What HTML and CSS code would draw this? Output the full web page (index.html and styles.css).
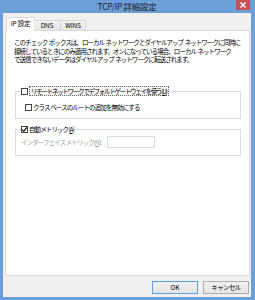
FILE: index.html
```html
<!DOCTYPE html>
<html lang="ja">
<head>
  <meta charset="UTF-8">
  <title>TCP/IP 詳細設定</title>
  <link rel="stylesheet" href="styles.css">
</head>
<body>
  <div class="window">
    <div class="titlebar">
      <span class="title">TCP/IP 詳細設定</span>
      <span class="close">
        <svg width="6" height="6" viewBox="0 0 6 6"><path d="M0.5 0.5 L5.5 5.5 M5.5 0.5 L0.5 5.5" stroke="#fff" stroke-width="1.4"/></svg>
      </span>
    </div>
    <div class="client">
      <div class="tabs">
        <div class="tab active">IP 設定</div>
        <div class="tab dns">DNS</div>
        <div class="tab wins">WINS</div>
      </div>
      <div class="panel">
        <p class="desc">このチェック ボックスは、ローカル ネットワークとダイヤルアップ ネットワークに同時に<br>接続しているときにのみ適用されます。オンになっている場合、ローカル ネットワーク<br>で送信できないデータはダイヤルアップ ネットワークに転送されます。</p>

        <fieldset class="group group-gw">
          <legend class="check">
            <span class="box"></span>
            <span class="focus">リモート ネットワークでデフォルト ゲートウェイを使う(<u>U</u>)</span>
          </legend>
          <div class="check sub">
            <span class="box"></span>
            <span>クラス ベースのルートの追加を無効にする</span>
          </div>
        </fieldset>

        <fieldset class="group group-metric">
          <legend class="check">
            <span class="box checked">
              <svg width="7" height="7" viewBox="0 0 7 7"><path d="M1.2 3.6 L2.8 5.2 L5.8 1.4" fill="none" stroke="#222" stroke-width="1.3"/></svg>
            </span>
            <span>自動メトリック(<u>A</u>)</span>
          </legend>
          <div class="metric-row">
            <span class="disabled">インターフェイス メトリック(<u>N</u>):</span>
            <span class="input"></span>
          </div>
        </fieldset>
      </div>
      <div class="buttons">
        <button class="btn default">OK</button>
        <button class="btn">キャンセル</button>
      </div>
    </div>
  </div>
</body>
</html>
```

FILE: styles.css
```css
body {
  margin: 0;
  font-family: "Noto Sans CJK JP", "Noto Sans", sans-serif;
  color: #000;
}
.window {
  width: 255px;
  height: 300px;
  box-sizing: border-box;
  background-color: #6c9fd8; /* 枠の青 */
  padding: 0 4px 3px 3px;
  display: flex;
  flex-direction: column;
}
.titlebar {
  height: 13px;
  display: grid;
  grid-template-columns: 1fr auto 1fr;
  align-items: start;
}
.title {
  grid-column: 2;
  font-size: 8.5px;
  line-height: 13px;
  color: #1e1e1e;
  letter-spacing: -0.3px;
}
.close {
  grid-column: 3;
  justify-self: end;
  margin-right: 1px;
  width: 14px;
  height: 10px;
  background-color: #c75050;
  display: flex;
  align-items: center;
  justify-content: center;
}
.client {
  flex: 1;
  background-color: #f0f0f0;
  padding: 4px 1px 3px 2px;
  display: flex;
  flex-direction: column;
  font-size: 6.5px;
  letter-spacing: -0.9px; /* Meiryo UI の細いかなに寄せる */
}
.tabs {
  display: flex;
  align-items: flex-end;
  height: 14px;
  padding-left: 1px;
  margin-bottom: -1px;
  position: relative;
  z-index: 1;
  letter-spacing: -0.2px;
}
.tab {
  box-sizing: border-box;
  height: 11px;
  line-height: 9px;
  text-align: center;
  border: 1px solid #d9d9d9;
  background: linear-gradient(#f3f3f3, #e6e6e6);
}
.tab.active {
  width: 29px;
  height: 14px;
  line-height: 11px;
  background: #fff;
  border-bottom: none;
}
.tab.dns {
  width: 27px;
  margin-left: -1px;
  border-left: none;
}
.tab.wins {
  width: 26px;
  margin-left: -1px;
}
.panel {
  flex: 1;
  background-color: #fff;
  border: 1px solid #d9d9d9;
  padding: 0 8px;
}
.desc {
  margin: 7px 0 0;
  line-height: 8.7px;
  white-space: nowrap;
  letter-spacing: -0.95px;
  word-spacing: 1px;
}
.group {
  border: 1px solid #dcdcdc;
  margin: 22px 0 0 1px;
  padding: 0 0 7px 5px;
  min-width: 0;
}
.group-metric {
  margin-top: 6px;
}
.group legend {
  padding: 0;
}
.check {
  display: flex;
  align-items: center;
  white-space: nowrap;
  line-height: 8px;
}
.box {
  box-sizing: border-box;
  width: 7px;
  height: 7px;
  border: 1px solid #444;
  background-color: #fff;
  margin-right: 1px;
  display: flex;
  align-items: center;
  justify-content: center;
}
.box svg {
  flex: none;
}
.focus {
  border: 1px dotted #666;
  background-color: #f4f4f4;
  padding: 0 1px;
  line-height: 8px;
  letter-spacing: -1.3px;
}
.sub {
  margin: 7px 0 0 4px;
}
.metric-row {
  display: flex;
  align-items: center;
  margin-top: 3px;
  white-space: nowrap;
}
.disabled {
  color: #a0a0a0;
}
.input {
  width: 48px;
  height: 12px;
  box-sizing: border-box;
  border: 1px solid #dcdcdc;
  margin-left: 6px;
  background-color: #fff;
}
.buttons {
  display: flex;
  justify-content: flex-end;
  gap: 5px;
  margin-top: 5px;
  padding-right: 1px;
}
.btn {
  box-sizing: border-box;
  width: 46px;
  height: 13px;
  padding: 0;
  font: inherit;
  line-height: 11px;
  letter-spacing: -0.6px;
  color: #000;
  border: 1px solid #adadad;
  background: linear-gradient(#f0f0f0, #e5e5e5);
}
.btn.default {
  border-color: #5fa0e0;
  letter-spacing: 0;
}
```
